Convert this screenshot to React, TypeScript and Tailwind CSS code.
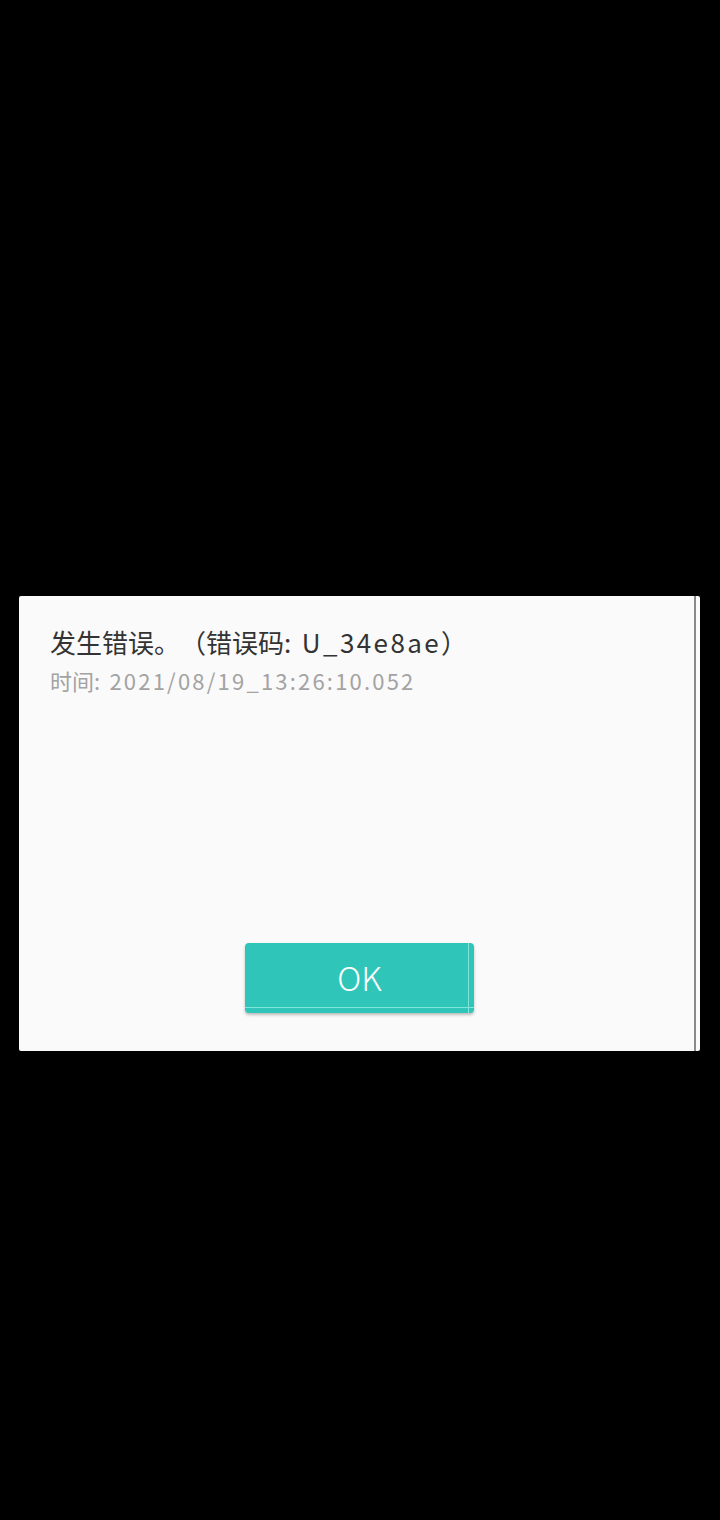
export default function App() {
  return (
    <div className="w-[720px] h-[1520px] bg-black flex flex-col" style={{ fontFamily: '"Noto Sans CJK SC", "Noto Sans", sans-serif' }}>
      <div className="h-[596px]" />
      <div className="ml-[19px] w-[681px] h-[455px] bg-[#fafafa] rounded-[2px] flex">
        <div className="flex-1 flex flex-col pl-[31px] pt-[28px]">
          <div className="text-[26px] leading-[36px] text-[#333333] [text-spacing-trim:space-all] whitespace-nowrap">
            发生错误。（错误码<span className="tracking-[2.4px]">: U_34e8ae</span>）
          </div>
          <div className="text-[22px] leading-[30px] text-[#a3a3a3] mt-[5px] whitespace-nowrap">
            时间<span className="tracking-[2.2px]">: 2021/08/19_13:26:10.052</span>
          </div>
          <div className="flex-1" />
          <div className="flex pl-[195px] mb-[38px]">
            <button className="relative w-[229px] h-[70px] rounded-[4px] bg-[#2fc6b9] text-white text-[33px] font-light shadow-[0_2px_3px_rgba(0,0,0,0.25)] overflow-hidden">
              OK
              <span className="absolute left-0 right-0 bottom-[5px] h-px bg-[#7fe6dc]" />
              <span className="absolute top-0 bottom-0 right-[5px] w-px bg-[#7fe6dc]" />
            </button>
          </div>
        </div>
        <div className="w-[2px] bg-[#8a8a8a]" />
        <div className="w-[4px]" />
      </div>
    </div>
  );
}
